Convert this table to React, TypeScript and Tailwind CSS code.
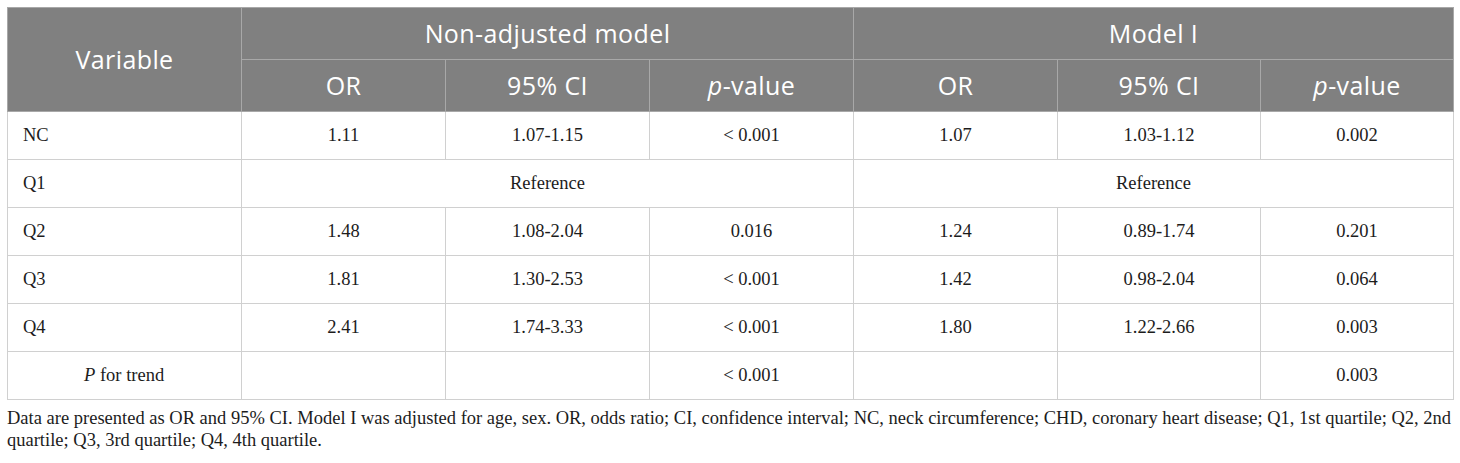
const rows = [
  { label: "NC", a: ["1.11", "1.07-1.15", "< 0.001"], b: ["1.07", "1.03-1.12", "0.002"] },
  { label: "Q1", ref: true },
  { label: "Q2", a: ["1.48", "1.08-2.04", "0.016"], b: ["1.24", "0.89-1.74", "0.201"] },
  { label: "Q3", a: ["1.81", "1.30-2.53", "< 0.001"], b: ["1.42", "0.98-2.04", "0.064"] },
  { label: "Q4", a: ["2.41", "1.74-3.33", "< 0.001"], b: ["1.80", "1.22-2.66", "0.003"] },
];

const th = "border border-[#a8a8a8] font-normal text-white text-center tracking-[0.4px]";
const td = "border border-[#d0d0d0] text-center h-[48px] p-0";

function PValue() {
  return (
    <>
      <span className="italic">p</span>-value
    </>
  );
}

export default function App() {
  return (
    <div className="bg-white w-[1460px] h-[463px] pt-[7px] px-[7px] text-[#1c1c1c]">
      <table
        className="table-fixed border-collapse w-[1446px] text-[18.5px]"
        style={{ fontFamily: '"Liberation Serif", "Times New Roman", serif' }}
      >
        <colgroup>
          <col className="w-[234px]" />
          <col className="w-[204px]" />
          <col className="w-[204px]" />
          <col className="w-[204px]" />
          <col className="w-[204px]" />
          <col className="w-[203px]" />
          <col className="w-[193px]" />
        </colgroup>
        <thead
          className="bg-[#808080] text-[25px]"
          style={{ fontFamily: '"Open Sans", "Noto Sans", sans-serif' }}
        >
          <tr className="h-[52px]">
            <th rowSpan={2} className={th}>
              Variable
            </th>
            <th colSpan={3} className={th}>
              Non-adjusted model
            </th>
            <th colSpan={3} className={th}>
              Model I
            </th>
          </tr>
          <tr className="h-[52px]">
            <th className={th}>OR</th>
            <th className={th}>95% CI</th>
            <th className={th}>
              <PValue />
            </th>
            <th className={th}>OR</th>
            <th className={th}>95% CI</th>
            <th className={th}>
              <PValue />
            </th>
          </tr>
        </thead>
        <tbody>
          {rows.map((r) => (
            <tr key={r.label}>
              <td className={`${td} text-left pl-[15px]`}>{r.label}</td>
              {r.ref ? (
                <>
                  <td colSpan={3} className={td}>Reference</td>
                  <td colSpan={3} className={td}>Reference</td>
                </>
              ) : (
                <>
                  {r.a!.map((v, i) => (
                    <td key={"a" + i} className={td}>{v}</td>
                  ))}
                  {r.b!.map((v, i) => (
                    <td key={"b" + i} className={td}>{v}</td>
                  ))}
                </>
              )}
            </tr>
          ))}
          <tr>
            <td className={`${td} text-left pl-[76px]`}>
              <span className="italic">P</span> for trend
            </td>
            <td className={td}></td>
            <td className={td}></td>
            <td className={td}>&lt; 0.001</td>
            <td className={td}></td>
            <td className={td}></td>
            <td className={td}>0.003</td>
          </tr>
        </tbody>
      </table>
      <p
        className="text-[18.5px] leading-[22px] mt-[7px] w-[1446px]"
        style={{ fontFamily: '"Liberation Serif", "Times New Roman", serif' }}
      >
        Data are presented as OR and 95% CI. Model I was adjusted for age, sex. OR, odds ratio; CI, confidence
        interval; NC, neck circumference; CHD, coronary heart disease; Q1, 1st quartile; Q2, 2nd
        <br />
        quartile; Q3, 3rd quartile; Q4, 4th quartile.
      </p>
    </div>
  );
}
